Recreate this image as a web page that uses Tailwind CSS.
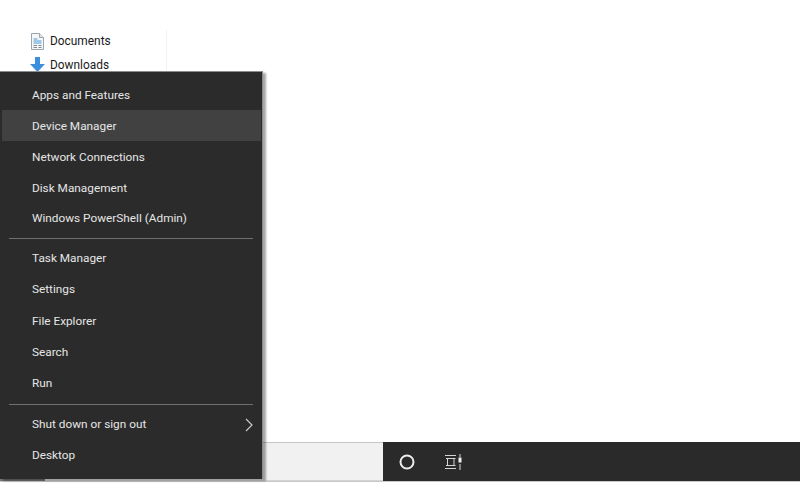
<!DOCTYPE html>
<html lang="en">
<head>
    <meta charset="UTF-8">
    <title>Win+X menu</title>
    <script src="https://cdn.jsdelivr.net/npm/@tailwindcss/browser@4"></script>
</head>
<body class="bg-white font-['Roboto','Noto_Sans',sans-serif]">
<div class="relative w-[800px] h-[500px] overflow-hidden bg-white">

    <!-- Explorer list behind the menu -->
    <div class="h-[442px] pt-[29px]">
        <div class="w-[167px] h-[60px] border-r border-[#f2f2f2] pl-[30px] text-[11.900px] text-[#1a1a1a]">
            <div class="flex items-center h-[24px] gap-[6px]">
                <svg width="14" height="17" viewBox="0 0 14 17">
                    <path d="M1.5 .5H9.5L13.5 4.500V16.500H1.500Z" fill="#f4f6f8" stroke="#9aa5ad"/>
                    <path d="M9.500 .5V4.500H13.500" fill="#dfe5ea" stroke="#9aa5ad"/>
                    <path d="M3.500 6H7.500M3.500 8H11.500M3.500 10H11.500" stroke="#4a9ad8" stroke-width="1.200"/>
                    <path d="M3.500 12.500H7M8.500 12.500H11.500M3.500 14.500H7M8.500 14.500H11.500" stroke="#7d8b96"/>
                </svg>
                <span class="pt-[2px]">Documents</span>
            </div>
            <div class="flex items-center h-[24px] gap-[5px]">
                <svg width="15" height="16" viewBox="0 0 15 16">
                    <path d="M5 0H10V7H15L7.500 15L0 7H5Z" fill="#3b8fdc"/>
                </svg>
                <span class="pt-[2px]">Downloads</span>
            </div>
        </div>
    </div>

    <!-- Taskbar -->
    <div class="flex h-[40px] border-b border-[#c9c9c9]">
        <div class="w-[383px] bg-[#f1f1f1] border-t border-b border-t-[#c6c6c6] border-b-[#d4d4d4]"></div>
        <div class="flex-1 bg-[#2a2a2a] flex items-center pl-[16px]">
            <svg width="16" height="16" viewBox="0 0 16 16" fill="none">
                <circle cx="8" cy="8" r="6.500" stroke="#ececec" stroke-width="2"/>
            </svg>
            <svg class="ml-[30px]" width="17" height="16" viewBox="0 0 17 16" fill="none" stroke="#d4d4d4">
                <path d="M0 1.500H11M0 14.500H11"/>
                <path d="M1 4.500H10.500M1 11.500H10.500M2.500 4.500V11.500M9 4.500V11.500"/>
                <path d="M15 0V3M15 10V16"/>
                <rect x="13.500" y="3.500" width="3" height="5" fill="#f0f0f0" stroke="none"/>
            </svg>
        </div>
    </div>

    <!-- Start button edge under the menu -->
    <div class="absolute left-0 top-[479px] w-[45px] h-[2px] bg-[#777777]"></div>

    <!-- Menu -->
    <div class="absolute left-0 top-[71px] w-[263px] h-[408px] bg-[#2b2b2b] border-t border-r border-[#8c8c8c] shadow-[3px_2px_2px_rgba(0,0,0,0.35)] pt-[7px] text-[11.800px] text-[#e6e6e6]">
        <div class="h-[31px] pl-[32px] pt-[2px] flex items-center">Apps and Features</div>
        <div class="h-[31px] pl-[30px] pt-[2px] ml-[2px] mr-[1px] flex items-center bg-[#414141]">Device Manager</div>
        <div class="h-[31px] pl-[32px] pt-[2px] flex items-center">Network Connections</div>
        <div class="h-[31px] pl-[32px] pt-[2px] flex items-center">Disk Management</div>
        <div class="h-[31px] pl-[32px] flex items-center">Windows PowerShell (Admin)</div>
        <div class="h-px bg-[#6f6f6f] mx-[9px] my-[4px]"></div>
        <div class="h-[31px] pl-[32px] flex items-center">Task Manager</div>
        <div class="h-[31px] pl-[32px] flex items-center">Settings</div>
        <div class="h-[31px] pl-[32px] pt-[2px] flex items-center">File Explorer</div>
        <div class="h-[31px] pl-[32px] pt-[2px] flex items-center">Search</div>
        <div class="h-[31px] pl-[32px] pt-[2px] flex items-center">Run</div>
        <div class="h-px bg-[#6f6f6f] mx-[9px] mt-[6px] mb-[4px]"></div>
        <div class="h-[31px] pl-[32px] pr-[9px] flex items-center justify-between">
            <span>Shut down or sign out</span>
            <svg width="8" height="14" viewBox="0 0 8 14" fill="none" stroke="#c8c8c8" stroke-width="1.200">
                <path d="M1 1L7 7L1 13"/>
            </svg>
        </div>
        <div class="h-[31px] pl-[32px] flex items-center">Desktop</div>
    </div>
</div>
</body>
</html>
